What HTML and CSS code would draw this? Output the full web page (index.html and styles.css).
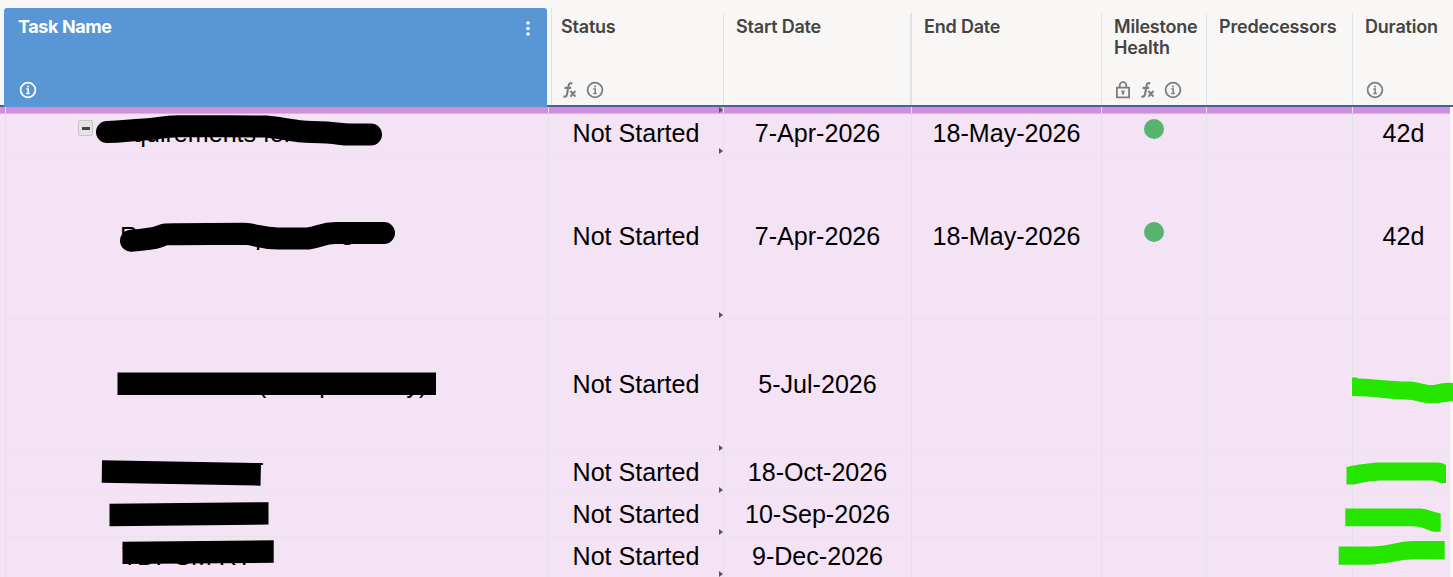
FILE: index.html
```html
<!DOCTYPE html>
<html lang="en">
<head>
  <meta charset="UTF-8" />
  <title>Task Sheet</title>
  <meta name="viewport" content="width=device-width, initial-scale=1.0" />
  <link rel="stylesheet" href="styles.css">
</head>
<body>
  <!-- shared icons -->
  <svg class="sprite" width="0" height="0">
    <symbol id="info" viewBox="0 0 18 18">
      <circle cx="9" cy="9" r="7.4" fill="none" stroke="currentColor" stroke-width="1.8" />
      <path d="M7.3 8h1.9v4.6M7.2 12.4h3.6" fill="none" stroke="currentColor" stroke-width="1.5" />
      <circle cx="9" cy="5.6" r="1" fill="currentColor" />
    </symbol>
    <symbol id="fx" viewBox="0 0 15 18">
      <path d="M10.3 2.6C8.4 1.6 7 2.4 6.6 4.6L5 13.2c-.4 2.2-1.6 2.9-3.6 2.2M2.6 6.9h6.6" fill="none" stroke="currentColor" stroke-width="2.1" />
      <path d="M8.4 10l5 5.6M13.4 10l-5 5.6" fill="none" stroke="currentColor" stroke-width="2" />
    </symbol>
    <symbol id="lock" viewBox="0 0 16 18">
      <path d="M1.9 6.7h12.2v9.6H1.9zM4.7 6.5V4.4a3.3 3.3 0 0 1 6.6 0v2.1" fill="none" stroke="currentColor" stroke-width="1.8" />
      <path d="M6.3 9.5h3.4l-1 4.2H7.3z" fill="currentColor" />
    </symbol>
  </svg>

  <div class="sheet">
    <div class="header">
      <div class="head task-head">
        <div class="head-title">Task Name
          <svg class="dots" width="4" height="15" viewBox="0 0 4 15"><circle cx="2" cy="2" r="1.8" /><circle cx="2" cy="7.5" r="1.8" /><circle cx="2" cy="13" r="1.8" /></svg>
        </div>
        <div class="icons"><svg width="18" height="18"><use href="#info" /></svg></div>
      </div>
      <div class="head status-head">
        <div class="head-title">Status</div>
        <div class="icons"><svg width="15" height="18"><use href="#fx" /></svg><svg width="18" height="18"><use href="#info" /></svg></div>
      </div>
      <div class="head"><div class="head-title">Start Date</div></div>
      <div class="head end-head"><div class="head-title">End Date</div></div>
      <div class="head">
        <div class="head-title">Milestone Health</div>
        <div class="icons"><svg width="16" height="18"><use href="#lock" /></svg><svg width="15" height="18"><use href="#fx" /></svg><svg width="18" height="18"><use href="#info" /></svg></div>
      </div>
      <div class="head"><div class="head-title">Predecessors</div></div>
      <div class="head">
        <div class="head-title">Duration</div>
        <div class="icons"><svg width="18" height="18"><use href="#info" /></svg></div>
      </div>
    </div>

    <div class="row row-band">
      <div class="cell"></div><div class="cell linked"></div><div class="cell"></div><div class="cell"></div><div class="cell"></div><div class="cell"></div><div class="cell"></div>
    </div>

    <div class="row">
      <div class="cell task indent-1"><span class="toggle"></span>quirements for</div>
      <div class="cell linked">Not Started</div>
      <div class="cell">7-Apr-2026</div>
      <div class="cell">18-May-2026</div>
      <div class="cell"><span class="health"></span></div>
      <div class="cell"></div>
      <div class="cell duration">42d</div>
    </div>

    <div class="row row-tall">
      <div class="cell task indent-2"><span>R</span><span class="gap-p">p</span><span class="gap-s">s</span></div>
      <div class="cell linked">Not Started</div>
      <div class="cell">7-Apr-2026</div>
      <div class="cell">18-May-2026</div>
      <div class="cell"><span class="health"></span></div>
      <div class="cell"></div>
      <div class="cell duration">42d</div>
    </div>

    <div class="row row-medium">
      <div class="cell task indent-3"><span>(</span><span class="gap-a">p</span><span class="gap-b">y)</span></div>
      <div class="cell linked">Not Started</div>
      <div class="cell">5-Jul-2026</div>
      <div class="cell"></div>
      <div class="cell"></div>
      <div class="cell"></div>
      <div class="cell"></div>
    </div>

    <div class="row">
      <div class="cell task indent-4">T</div>
      <div class="cell linked">Not Started</div>
      <div class="cell">18-Oct-2026</div>
      <div class="cell"></div>
      <div class="cell"></div>
      <div class="cell"></div>
      <div class="cell"></div>
    </div>

    <div class="row">
      <div class="cell task"></div>
      <div class="cell linked">Not Started</div>
      <div class="cell">10-Sep-2026</div>
      <div class="cell"></div>
      <div class="cell"></div>
      <div class="cell"></div>
      <div class="cell"></div>
    </div>

    <div class="row">
      <div class="cell task indent-5"><span>TDP</span><span class="gap-c">SM RT</span></div>
      <div class="cell linked">Not Started</div>
      <div class="cell">9-Dec-2026</div>
      <div class="cell"></div>
      <div class="cell"></div>
      <div class="cell"></div>
      <div class="cell"></div>
    </div>

    <!-- marker strokes drawn over the sheet -->
    <svg class="markup" width="1453" height="577" viewBox="0 0 1453 577">
      <g class="pen">
        <path d="M107 132C124 132 128 130 144 129.500C158 129 162 126.500 178 126.200C200 126 240 126.500 266 126.500C284 128 292 131.500 312 132C340 132.500 338 134.500 350 134.500H371" />
        <path d="M131 240.700C146 239.500 152 239 158 237C166 234 164 234.200 176 234.200C200 234 220 233.800 244 233.800C258 234.500 260 238.500 278 238.500H308C320 237 322 233 336 233H384" />
      </g>
      <g class="ink">
        <path d="M117.500 372.500H436V395H117.500z" />
        <path d="M102 460.200L261 463.200L260.500 485.700L101.700 482.800z" />
        <path d="M109.500 503.800L268.500 502.200V524.500L109.500 526.200z" />
        <path d="M122.500 541.700L273.700 540.300V562.800L122.500 564z" />
      </g>
      <g class="highlighter">
        <path d="M1352 377.500L1357 377.500L1358 378.500C1378 379 1390 381.500 1410 381.500C1420 382 1424 385.500 1434 385C1442 383.500 1446 382.500 1453 383V401C1444 402 1440 403.500 1428 403C1418 402.500 1416 399.500 1404 399.500C1386 399 1374 396 1352 396z" />
        <path d="M1346.500 467C1352 465.500 1366 463.500 1376 462.500H1434C1440 462.500 1443 463 1446 465V483H1440C1436 481 1434 480.500 1428 480.500H1384C1370 480.500 1360 483 1354 484.500H1346.500z" />
        <path d="M1345.300 508.500H1418C1428 508.500 1432 512 1440.700 513.500V531.800H1434C1428 531 1424 526.500 1412 526.300H1345.300z" />
        <path d="M1338.700 546.500H1368C1390 546.500 1398 541 1414 541H1444.700V559.500L1414 559.300C1396 560 1386 564.500 1366 564.700H1338.700z" />
      </g>
    </svg>
  </div>
</body>
</html>
```
FILE: styles.css
```css
body {
  margin: 0;
  background-color: #f8f7f5;
  overflow: hidden;
}

.sprite {
  position: absolute;
}

.sheet {
  position: relative;
  width: 1453px;
  height: 577px;
  overflow: hidden;
}

.header,
.row {
  display: grid;
  grid-template-columns: 543px 175px 188px 190px 105px 146px 98px;
  box-sizing: border-box;
  padding-left: 5px;
}

/* header */
.header {
  height: 107px;
  padding-top: 13px;
  border-bottom: 2px solid #4663a0;
  font-family: Inter, sans-serif;
  font-size: 18px;
  font-weight: 600;
  line-height: 21px;
  letter-spacing: -0.2px;
  color: #444;
}

.head {
  display: flex;
  flex-direction: column;
  justify-content: space-between;
  box-sizing: border-box;
  border-left: 1px solid #e2e2e2;
  padding: 3px 4px 6px 12px;
}

.end-head {
  border-left-width: 2px;
  margin-left: -1px;
}

.status-head {
  margin: -5px 0 0 3px;
  padding: 8px 4px 6px 9px;
}

.task-head {
  margin: -5px 1px -2px -1px;
  padding: 8px 17px 8px 14px;
  border: none;
  border-radius: 3px 3px 0 0;
  background-color: #5896d6;
  color: #fff;
  font-weight: 700;
  letter-spacing: -0.4px;
}

.head-title {
  display: flex;
  justify-content: space-between;
}

.dots {
  fill: #fff;
  margin-top: 5px;
}

.icons {
  display: flex;
  gap: 9px;
  margin-left: 0.5px;
  color: #7d7d7d;
}

.task-head .icons {
  color: #fff;
}

/* rows */
.row {
  width: 1450px;
  height: 42px;
  background-color: #f4e3f5;
  font-family: 'Liberation Sans', Arial, sans-serif;
  font-size: 25.1px;
  line-height: 28px;
  color: #000;
}

.row-tall {
  height: 164px;
}

.row-medium {
  height: 133px;
}

.cell {
  position: relative;
  display: flex;
  align-items: center;
  justify-content: center;
  box-sizing: border-box;
  border-left: 1px solid #e5e2e6;
  border-bottom: 1px solid #ebe2eb;
  padding-bottom: 3px;
  white-space: pre;
}

.row-medium .cell {
  padding-bottom: 4px;
}

.row-band {
  height: 6px;
  margin-bottom: 1px;
  background-color: #d08fda;
  box-shadow: 0 1px #dfb4e5;
}

.row-band .cell {
  border-bottom: none;
  padding: 0;
}

/* small arrow in the corner of formula cells */
.linked::after {
  content: '';
  position: absolute;
  right: 0;
  bottom: 1px;
  border-left: 4px solid #555;
  border-top: 3px solid transparent;
  border-bottom: 3px solid transparent;
}

.row-band .linked::after {
  bottom: 0;
}

.duration {
  padding-left: 4px;
}

.task {
  justify-content: flex-start;
}

.indent-1 {
  padding-left: 126px;
}

.indent-2 {
  padding-left: 114px;
}

.indent-3 {
  padding-left: 252px;
}

.indent-4 {
  padding-left: 242px;
}

.indent-5 {
  padding-left: 116px;
}

.gap-p {
  margin-left: 117px;
}

.gap-s {
  margin-left: 72px;
}

.gap-a {
  margin-left: 53px;
}

.gap-b {
  margin-left: 73px;
}

.gap-c {
  margin-left: 2px;
}

.toggle {
  position: absolute;
  left: 72px;
  top: 6px;
  width: 13px;
  height: 14px;
  border: 1px solid #c6c6c6;
  border-radius: 2px;
  background-color: #e3e3e3;
}

.toggle::after {
  content: '';
  position: absolute;
  left: 3px;
  top: 6px;
  width: 8px;
  height: 3px;
  background-color: #444;
}

.health {
  width: 20px;
  height: 20px;
  border-radius: 50%;
  background-color: #58b270;
  margin-bottom: 9px;
}

/* marker strokes */
.markup {
  position: absolute;
  left: 0;
  top: 0;
}

.pen {
  fill: none;
  stroke: #000;
  stroke-width: 22;
  stroke-linecap: round;
  stroke-linejoin: round;
}

.ink {
  fill: #000;
}

.highlighter {
  fill: #26e600;
}
```
